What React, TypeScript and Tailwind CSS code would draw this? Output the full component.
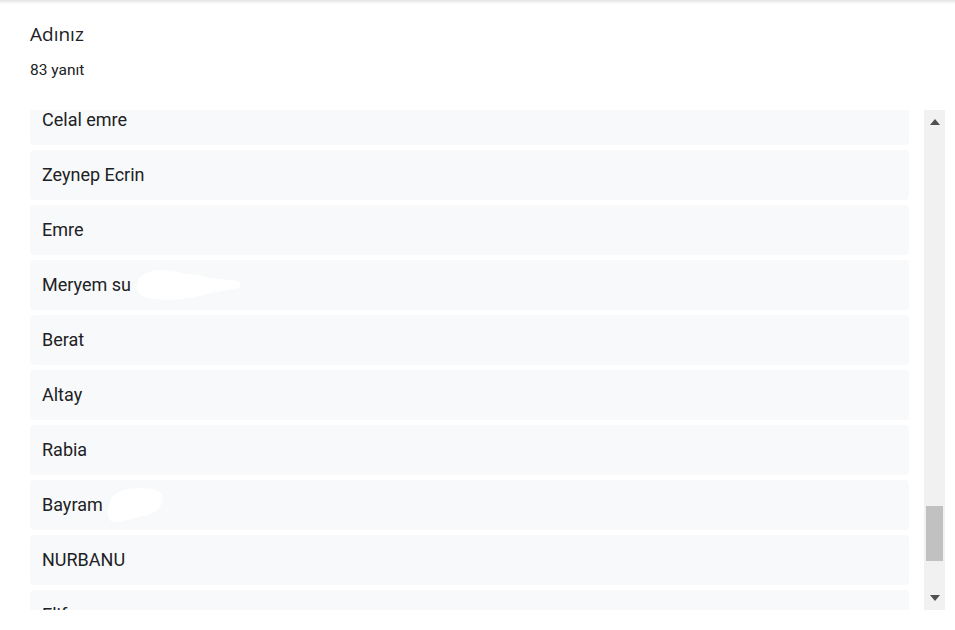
import React from 'react';

const names = [
  'Celal emre',
  'Zeynep Ecrin',
  'Emre',
  'Meryem su',
  'Berat',
  'Altay',
  'Rabia',
  'Bayram',
  'NURBANU',
  'Elif',
];

function Blob({ kind }: { kind: 'wide' | 'small' }) {
  if (kind === 'wide') {
    return (
      <svg width="108" height="36" viewBox="0 0 108 36" className="absolute left-[104px] top-[6px]">
        <path d="M4 14 C10 4 30 2 44 6 C56 9 64 8 76 12 C88 14 100 13 106 16 L106 22 C92 24 80 26 66 30 C50 34 30 35 14 32 C4 30 0 22 4 14 Z" fill="#ffffff" />
      </svg>
    );
  }
  return (
    <svg width="62" height="40" viewBox="0 0 64 40" className="absolute left-[74px] top-[5px]">
      <path d="M6 18 C8 8 18 4 30 3 C44 2 58 3 60 10 C62 18 58 26 46 30 C36 32 24 36 12 38 C4 38 2 28 6 18 Z" fill="#ffffff" />
    </svg>
  );
}

export default function App() {
  return (
    <div className="h-[630px] w-[955px] overflow-hidden bg-white font-['Roboto',sans-serif] text-[#202124]">
      <div className="h-[4px] bg-gradient-to-b from-[#e3e3e3] to-white" />
      <div className="px-[30px] pt-[18px]">
        <h1 className="font-['Open_Sans',sans-serif] text-[19px] leading-[24px] text-[#202124]">Adınız</h1>
        <p className="mt-[14px] text-[15.5px] leading-[20px]">83 yanıt</p>
      </div>
      <div className="mt-[30px] flex h-[500px]">
        <div className="ml-[30px] w-[879px] overflow-hidden">
          <div className="-mt-[15px] flex flex-col gap-[5px]">
            {names.map((n) => (
              <div key={n} className="relative flex h-[50px] shrink-0 items-center rounded-[4px] bg-[#f8f9fa] px-[12px] pb-[2px] text-[18px]">
                <span>{n}</span>
                {n === 'Meryem su' && <Blob kind="wide" />}
                {n === 'Bayram' && <Blob kind="small" />}
              </div>
            ))}
          </div>
        </div>
        <div className="ml-[15px] flex w-[21px] flex-col items-center bg-[#f1f1f1]">
          <svg width="10" height="6" viewBox="0 0 10 6" className="mt-[9px]">
            <path d="M0 6 L5 0 L10 6 Z" fill="#505050" />
          </svg>
          <div className="flex-1" />
          <div className="mb-[34px] h-[55px] w-[17px] bg-[#c1c1c1]" />
          <svg width="10" height="6" viewBox="0 0 10 6" className="mb-[9px]">
            <path d="M0 0 L10 0 L5 6 Z" fill="#505050" />
          </svg>
        </div>
      </div>
    </div>
  );
}
